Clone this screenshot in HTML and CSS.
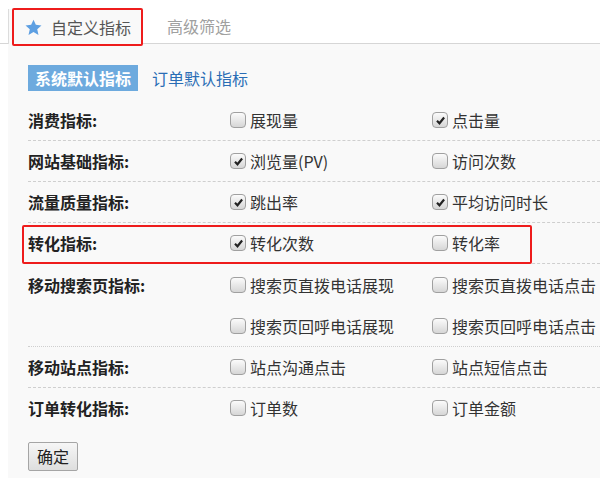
FILE: index.html
```html
<!DOCTYPE html>
<html lang="zh-CN">
<head>
<meta charset="utf-8">
<title>自定义指标</title>
<link rel="stylesheet" href="styles.css">
</head>
<body>
<div class="page">
  <div class="tabs">
    <div class="tab active">
      <svg class="star" width="17" height="17" viewBox="0 0 16 16"><polygon points="8,0.6 10.2,5.5 15.5,6 11.5,9.6 12.7,15 8,12.2 3.3,15 4.5,9.6 0.5,6 5.8,5.5" fill="#5d9fe2"/></svg>
      <span>自定义指标</span>
    </div>
    <div class="tab">高级筛选</div>
  </div>
  <div class="panel">
    <div class="subtabs">
      <span class="subtab on">系统默认指标</span>
      <span class="subtab">订单默认指标</span>
    </div>
    <div class="rows">
      <div class="row">
        <div class="label">消费指标:</div>
        <div class="opts">
          <label class="opt"><i class="cb"></i>展现量</label>
          <label class="opt"><i class="cb on"><svg viewBox="0 0 14 14"><path d="M3.2 7.3 L5.9 10 L10.9 3.8"/></svg></i>点击量</label>
        </div>
      </div>
      <div class="row">
        <div class="label">网站基础指标:</div>
        <div class="opts">
          <label class="opt"><i class="cb on"><svg viewBox="0 0 14 14"><path d="M3.2 7.3 L5.9 10 L10.9 3.8"/></svg></i>浏览量(PV)</label>
          <label class="opt"><i class="cb"></i>访问次数</label>
        </div>
      </div>
      <div class="row">
        <div class="label">流量质量指标:</div>
        <div class="opts">
          <label class="opt"><i class="cb on"><svg viewBox="0 0 14 14"><path d="M3.2 7.3 L5.9 10 L10.9 3.8"/></svg></i>跳出率</label>
          <label class="opt"><i class="cb on"><svg viewBox="0 0 14 14"><path d="M3.2 7.3 L5.9 10 L10.9 3.8"/></svg></i>平均访问时长</label>
        </div>
      </div>
      <div class="row">
        <div class="label">转化指标:</div>
        <div class="opts">
          <label class="opt"><i class="cb on"><svg viewBox="0 0 14 14"><path d="M3.2 7.3 L5.9 10 L10.9 3.8"/></svg></i>转化次数</label>
          <label class="opt"><i class="cb"></i>转化率</label>
        </div>
      </div>
      <div class="row dotted">
        <div class="label">移动搜索页指标:</div>
        <div class="opts">
          <label class="opt"><i class="cb"></i>搜索页直拨电话展现</label>
          <label class="opt"><i class="cb"></i>搜索页直拨电话点击</label>
          <label class="opt"><i class="cb"></i>搜索页回呼电话展现</label>
          <label class="opt"><i class="cb"></i>搜索页回呼电话点击</label>
        </div>
      </div>
      <div class="row">
        <div class="label">移动站点指标:</div>
        <div class="opts">
          <label class="opt"><i class="cb"></i>站点沟通点击</label>
          <label class="opt"><i class="cb"></i>站点短信点击</label>
        </div>
      </div>
      <div class="row last">
        <div class="label">订单转化指标:</div>
        <div class="opts">
          <label class="opt"><i class="cb"></i>订单数</label>
          <label class="opt"><i class="cb"></i>订单金额</label>
        </div>
      </div>
    </div>
    <button class="btn">确定</button>
  </div>
  <div class="mark mark-tab"></div>
  <div class="mark mark-row"></div>
</div>
</body>
</html>
```

FILE: styles.css
```css
html, body {
  margin: 0;
  padding: 0;
  background: #ffffff;
}
body {
  font-family: "Microsoft YaHei", "Noto Sans CJK SC", "Noto Sans", sans-serif;
  font-size: 16px;
  color: #333;
  width: 600px;
  height: 479px;
  overflow: hidden;
}
.page {
  position: relative;
  height: 479px;
}
.tabs {
  display: flex;
  align-items: flex-end;
  height: 44px;
  padding-left: 8px;
  border-bottom: 1px solid #d6d6d6;
  box-sizing: border-box;
}
.tab {
  height: 34px;
  line-height: 34px;
  color: #a0a0a0;
  padding-left: 25px;
  white-space: nowrap;
}
.tab.active {
  display: flex;
  align-items: center;
  width: 134px;
  box-sizing: border-box;
  height: 35px;
  margin-bottom: -1px;
  padding-left: 16px;
  background: #f9f9f9;
  border-left: 1px solid #dcdcdc;
  color: #555;
}
.star {
  display: block;
  margin-right: 9px;
  margin-top: 1px;
}
.panel {
  margin-left: 8px;
  padding: 21px 0 0 20px;
  background: #f9f9f9;
  height: 434px;
  box-sizing: border-box;
}
.subtabs {
  display: flex;
  align-items: center;
  gap: 14px;
  height: 26px;
}
.subtab {
  line-height: 26px;
  color: #2a6db5;
}
.subtab.on {
  background: #6daade;
  color: #fff;
  font-weight: bold;
  padding: 0 7px;
}
.rows {
  margin-top: 9px;
}
.row {
  display: flex;
  border-bottom: 1px dashed #cfcfcf;
}
.row.dotted {
  border-bottom: 1px dotted #cfcfcf;
}
.row.last {
  border-bottom: none;
}
.label {
  width: 202px;
  flex: none;
  font-weight: bold;
  line-height: 40px;
  height: 40px;
  color: #222;
}
.row.dotted .label {
  line-height: 42px;
}
.opts {
  display: grid;
  grid-template-columns: 202px auto;
  flex: 1;
}
.row.dotted .opts {
  grid-auto-rows: 41px;
}
.opt {
  display: flex;
  align-items: center;
  height: 40px;
  color: #333;
  white-space: nowrap;
}
.row.dotted .opt {
  height: 41px;
  padding-top: 1px;
  box-sizing: border-box;
}
.cb {
  flex: none;
  width: 16px;
  height: 16px;
  box-sizing: border-box;
  border: 1px solid #a0a0a0;
  border-radius: 4px;
  background: linear-gradient(#fbfbfb, #d6d6d6);
  margin-right: 4px;
  display: flex;
  align-items: center;
  justify-content: center;
}
.cb svg {
  width: 13px;
  height: 13px;
}
.cb svg path {
  fill: none;
  stroke: #222;
  stroke-width: 2.3;
}
.btn {
  margin-top: 14px;
  font-family: inherit;
  font-size: 16px;
  color: #222;
  height: 29px;
  width: 50px;
  padding: 0;
  border: 1px solid #a5a5a5;
  border-radius: 2px;
  background: linear-gradient(#f6f6f6, #dedede);
  line-height: 27px;
}
.mark {
  position: absolute;
  border: 2px solid #ee1c1c;
  border-radius: 2px;
  box-sizing: border-box;
  pointer-events: none;
}
.mark-tab {
  left: 12px;
  top: 8px;
  width: 131px;
  height: 38px;
}
.mark-row {
  left: 22px;
  top: 225px;
  width: 510px;
  height: 39px;
}
```
